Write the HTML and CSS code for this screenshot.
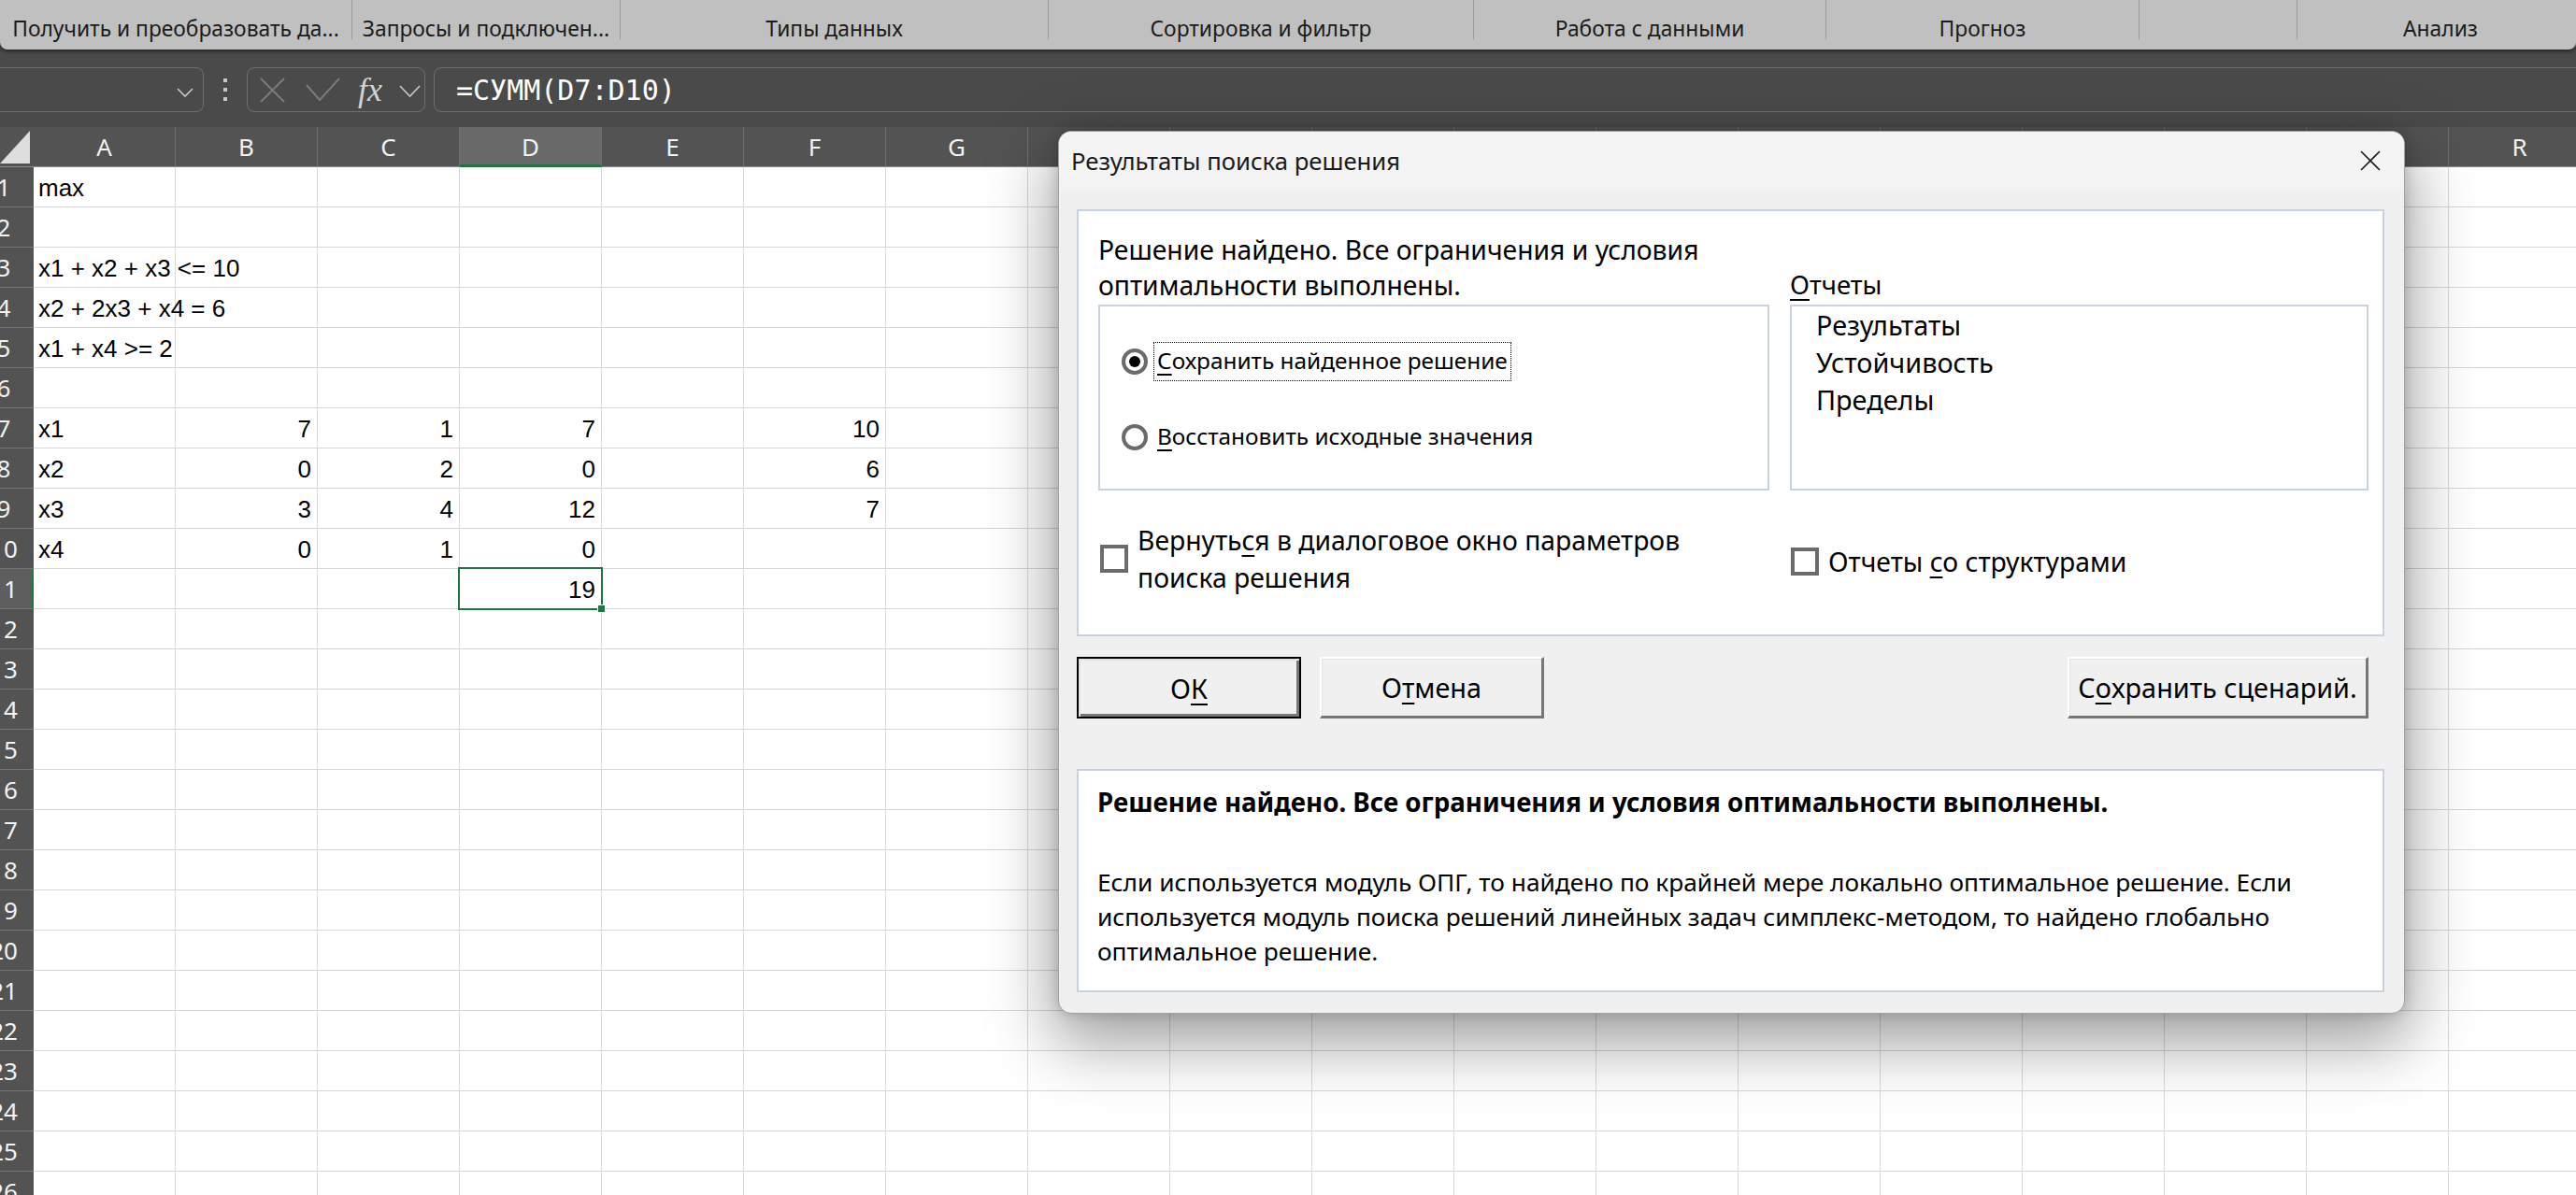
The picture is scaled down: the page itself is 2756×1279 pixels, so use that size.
FILE: index.html
```html
<!DOCTYPE html>
<html lang="ru">
<head>
<meta charset="utf-8">
<title>Результаты поиска решения</title>
<link rel="stylesheet" href="styles.css">
</head>
<body>
<div class="app">
  <header class="ribbon">
    <div class="grp g1"><span class="glabel">Получить и преобразовать да...</span></div>
    <div class="grp g2"><span class="glabel">Запросы и подключен...</span></div>
    <div class="grp g3"><span class="glabel">Типы данных</span></div>
    <div class="grp g4"><span class="glabel">Сортировка и фильтр</span></div>
    <div class="grp g5"><span class="glabel">Работа с данными</span></div>
    <div class="grp g6"><span class="glabel">Прогноз</span></div>
    <div class="grp g7"></div>
    <div class="grp g8"><span class="glabel">Анализ</span></div>
  </header>

  <div class="fbar">
    <div class="namebox">
      <svg class="chev" width="18" height="10" viewBox="0 0 18 10"><path d="M1 1 L9 9 L17 1" fill="none" stroke="#c8c8c8" stroke-width="1.6"/></svg>
    </div>
    <div class="dots">
      <svg width="6" height="24" viewBox="0 0 6 24"><rect x="1" y="0" width="4" height="4" fill="#c8c8c8"/><rect x="1" y="10" width="4" height="4" fill="#c8c8c8"/><rect x="1" y="20" width="4" height="4" fill="#c8c8c8"/></svg>
    </div>
    <div class="fbtns">
      <svg class="ico-x" width="27" height="27" viewBox="0 0 27 27"><path d="M1 1 L26 26 M26 1 L1 26" fill="none" stroke="#7b7b7b" stroke-width="2"/></svg>
      <svg class="ico-check" width="37" height="26" viewBox="0 0 37 26"><path d="M1 8 L15 24 L36 1" fill="none" stroke="#7b7b7b" stroke-width="2"/></svg>
      <span class="fx">fx</span>
      <svg class="chev2" width="23" height="14" viewBox="0 0 23 14"><path d="M1 1 L11.5 12 L22 1" fill="none" stroke="#c8c8c8" stroke-width="1.6"/></svg>
    </div>
    <div class="finput">=СУММ(D7:D10)</div>
  </div>

  <div class="sheet">
    <div class="colhead">
      <div class="corner"><svg width="36" height="43" viewBox="0 0 36 43"><polygon points="0,39 32,4 32,39" fill="#dedede"/></svg></div>
      <div class="ch">A</div><div class="ch">B</div><div class="ch">C</div><div class="ch sel">D</div><div class="ch">E</div><div class="ch">F</div><div class="ch">G</div><div class="ch"></div><div class="ch"></div><div class="ch"></div><div class="ch"></div><div class="ch"></div><div class="ch"></div><div class="ch"></div><div class="ch"></div><div class="ch"></div><div class="ch"></div><div class="ch">R</div>
    </div>
    <div class="sbody">
      <div class="rowheads">
        <div class="rh"><span>1</span></div><div class="rh"><span>2</span></div><div class="rh"><span>3</span></div><div class="rh"><span>4</span></div><div class="rh"><span>5</span></div><div class="rh"><span>6</span></div><div class="rh"><span>7</span></div><div class="rh"><span>8</span></div><div class="rh"><span>9</span></div><div class="rh"><span>10</span></div><div class="rh sel"><span>11</span></div><div class="rh"><span>12</span></div><div class="rh"><span>13</span></div><div class="rh"><span>14</span></div><div class="rh"><span>15</span></div><div class="rh"><span>16</span></div><div class="rh"><span>17</span></div><div class="rh"><span>18</span></div><div class="rh"><span>19</span></div><div class="rh"><span>20</span></div><div class="rh"><span>21</span></div><div class="rh"><span>22</span></div><div class="rh"><span>23</span></div><div class="rh"><span>24</span></div><div class="rh"><span>25</span></div><div class="rh"><span>26</span></div>
      </div>
      <div class="cells">
        <div class="row"><div class="cell">max</div></div>
        <div class="row"></div>
        <div class="row"><div class="cell">x1 + x2 + x3 &lt;= 10</div></div>
        <div class="row"><div class="cell">x2 + 2x3 + x4 = 6</div></div>
        <div class="row"><div class="cell">x1 + x4 &gt;= 2</div></div>
        <div class="row"></div>
        <div class="row"><div class="cell">x1</div><div class="cell num">7</div><div class="cell num">1</div><div class="cell num">7</div><div class="cell"></div><div class="cell num">10</div></div>
        <div class="row"><div class="cell">x2</div><div class="cell num">0</div><div class="cell num">2</div><div class="cell num">0</div><div class="cell"></div><div class="cell num">6</div></div>
        <div class="row"><div class="cell">x3</div><div class="cell num">3</div><div class="cell num">4</div><div class="cell num">12</div><div class="cell"></div><div class="cell num">7</div></div>
        <div class="row"><div class="cell">x4</div><div class="cell num">0</div><div class="cell num">1</div><div class="cell num">0</div></div>
        <div class="row"><div class="cell"></div><div class="cell"></div><div class="cell"></div><div class="cell num sel">19</div></div>
      </div>
    </div>
  </div>

  <div class="dialog">
    <div class="dtitle">
      <span>Результаты поиска решения</span>
      <svg class="close" width="22" height="22" viewBox="0 0 22 22"><path d="M1 1 L21 21 M21 1 L1 21" fill="none" stroke="#1a1a1a" stroke-width="1.6"/></svg>
    </div>
    <div class="dbody">
      <section class="panel1">
        <div class="msg">Решение найдено. Все ограничения и условия<br>оптимальности выполнены.</div>
        <div class="replabel"><u>О</u>тчеты</div>
        <div class="radiobox">
          <div class="ropt"><span class="radio on"></span><span class="rlabel focus"><u>С</u>охранить найденное решение</span></div>
          <div class="ropt"><span class="radio"></span><span class="rlabel"><u>В</u>осстановить исходные значения</span></div>
        </div>
        <div class="listbox">
          <div class="li">Результаты</div>
          <div class="li">Устойчивость</div>
          <div class="li">Пределы</div>
        </div>
        <div class="chk left"><span class="box"></span><span class="clabel">Вернуть<u>с</u>я в диалоговое окно параметров<br>поиска решения</span></div>
        <div class="chk right"><span class="box"></span><span class="clabel">Отчеты <u>с</u>о структурами</span></div>
      </section>

      <div class="btnrow">
        <button class="btn ok">О<u>К</u></button>
        <button class="btn cancel">О<u>т</u>мена</button>
        <button class="btn save">С<u>о</u>хранить сценарий.</button>
      </div>

      <section class="panel2">
        <div class="bold">Решение найдено. Все ограничения и условия оптимальности выполнены.</div>
        <div class="para">Если используется модуль ОПГ, то найдено по крайней мере локально оптимальное решение. Если<br>используется модуль поиска решений линейных задач симплекс-методом, то найдено глобально<br>оптимальное решение.</div>
      </section>
    </div>
  </div>
</div>
</body>
</html>
```
FILE: styles.css
```css
* { box-sizing: border-box; }
html, body { margin: 0; padding: 0; }
body {
  width: 2756px;
  height: 1279px;
  overflow: hidden;
  background: #4a4a4a;
  font-family: "Noto Sans", "Open Sans", sans-serif;
}
.app { position: relative; width: 2756px; height: 1279px; overflow: hidden; }

/* Ribbon */
.ribbon {
  position: relative;
  z-index: 2;
  display: flex;
  height: 53px;
  background: #c0c0c0;
  border-radius: 0 0 8px 8px;
  box-shadow: 0 2px 4px rgba(0, 0, 0, 0.55);
}
.grp {
  flex: none;
  height: 42px;
  display: flex;
  align-items: flex-end;
  justify-content: center;
  border-right: 1px solid #9c9c9c;
}
.glabel { font-size: 22.8px; line-height: 26px; color: #1b1b1b; white-space: nowrap; margin-bottom: -2px; }
.g1 { width: 377px; }
.g2 { width: 287px; }
.g3 { width: 458px; }
.g4 { width: 455px; }
.g5 { width: 377px; }
.g6 { width: 335px; }
.g7 { width: 169px; }
.g8 { width: 306px; border-right: none; }

/* Formula bar */
.fbar { height: 83px; display: flex; align-items: flex-start; padding-top: 19px; }
.namebox {
  flex: none;
  width: 230px;
  height: 48px;
  margin-left: -12px;
  border: 1px solid #6f6f6f;
  border-radius: 8px;
  display: flex;
  align-items: center;
  justify-content: flex-end;
  padding-right: 10px;
  padding-top: 5px;
}
.dots { flex: none; width: 46px; height: 48px; display: flex; align-items: center; justify-content: center; }
.fbtns {
  flex: none;
  width: 191px;
  height: 48px;
  border: 1px solid #6f6f6f;
  border-radius: 8px;
  display: flex;
  align-items: center;
  padding-left: 13px;
}
.ico-x { flex: none; margin-right: 22px; }
.ico-check { flex: none; margin-right: 19px; }
.fx {
  flex: none;
  width: 33px;
  margin-right: 11px;
  font-family: "Liberation Serif", serif;
  font-style: italic;
  font-size: 36px;
  line-height: 1;
  color: #d2d2d2;
}
.chev2 { flex: none; margin-top: 4px; }
.finput {
  flex: 1;
  height: 48px;
  margin-left: 9px;
  margin-right: -20px;
  border: 1px solid #6f6f6f;
  border-radius: 8px;
  display: flex;
  align-items: center;
  padding-left: 23px;
  font-family: "DejaVu Sans Mono", "Liberation Mono", monospace;
  font-size: 30px;
  color: #ffffff;
}

/* Sheet */
.sheet { background: #ffffff; height: 1143px; }
.colhead { display: flex; height: 43px; background: #535353; }
.corner { flex: none; width: 36px; height: 43px; border-bottom: 1px solid #8c8c8c; }
.corner svg { display: block; }
.ch {
  flex: none;
  width: 152px;
  height: 43px;
  border-right: 1px solid #6e6e6e;
  border-bottom: 1px solid #8c8c8c;
  display: flex;
  align-items: center;
  justify-content: center;
  color: #f2f2f2;
  font-size: 26px;
}
.ch.sel { background: #696969; border-bottom: 3px solid #217346; padding-top: 2px; }
.sbody { display: flex; }
.rowheads { flex: none; width: 36px; background: #535353; }
.rh {
  height: 43px;
  border-bottom: 1px solid #767676;
  overflow: hidden;
  display: flex;
  align-items: center;
  color: #f2f2f2;
  font-size: 26px;
}
.rh span { flex: none; width: 62px; margin-left: -27px; text-align: center; }
.rh.sel { background: #5e5e5e; border-right: 2px solid #217346; }
.cells {
  flex: 1;
  height: 1100px;
  background-image:
    linear-gradient(to left, #dadada 1px, transparent 1px),
    linear-gradient(to top, #d6d6d6 1px, transparent 1px);
  background-size: 152px 43px;
}
.row { display: flex; height: 43px; }
.cell {
  flex: none;
  width: 152px;
  height: 43px;
  display: flex;
  align-items: flex-end;
  padding: 0 5px 6px 5px;
  font-family: "Liberation Sans", Arial, sans-serif;
  font-size: 26px;
  line-height: 30px;
  white-space: nowrap;
  color: #000;
}
.cell.num { justify-content: flex-end; padding-right: 7px; }
.cell.sel { position: relative; }
.cell.sel::before {
  content: "";
  position: absolute;
  left: -2px;
  top: -2px;
  right: -1px;
  bottom: -1px;
  border: 2px solid #217346;
}
.cell.sel::after {
  content: "";
  position: absolute;
  right: -4px;
  bottom: -4px;
  width: 7px;
  height: 7px;
  background: #217346;
  border: 1px solid #ffffff;
}

/* Dialog */
.dialog {
  position: absolute;
  left: 1132px;
  top: 140px;
  width: 1441px;
  height: 945px;
  background: #f0f0f0;
  border: 1px solid #a2a2a2;
  border-radius: 14px;
  box-shadow: 0 26px 70px 6px rgba(0, 0, 0, 0.38), 0 0 14px rgba(0, 0, 0, 0.18);
  overflow: hidden;
  display: flex;
  flex-direction: column;
  color: #000;
  font-family: "Noto Sans", "Open Sans", sans-serif;
  font-size: 28px;
}
.dtitle {
  flex: none;
  height: 62px;
  background: #f3f3f3;
  display: flex;
  align-items: center;
  justify-content: space-between;
  padding: 0 25px 0 13px;
  font-size: 25.7px;
  color: #1a1a1a;
}
.dbody { flex: 1; display: flex; flex-direction: column; padding: 21px 21px 0 19px; }
u { text-decoration-thickness: 2px; text-underline-offset: 5px; }

.panel1 {
  flex: none;
  height: 457px;
  background: #ffffff;
  border: 2px solid #c8d2dd;
  padding: 22px 15px 0 21px;
  display: grid;
  grid-template-columns: 718px 619px;
  grid-template-rows: 76px 199px auto;
  align-content: start;
  column-gap: 22px;
  row-gap: 2px;
}
.msg { font-size: 28.3px; line-height: 38px; white-space: nowrap; }
.replabel { align-self: end; font-size: 27.5px; line-height: 38px; }
.radiobox {
  border: 2px solid #c8d2dd;
  padding: 38px 0 0 23px;
  display: flex;
  flex-direction: column;
  gap: 39px;
}
.ropt { display: flex; align-items: center; height: 42px; gap: 6px; }
.radio {
  flex: none;
  width: 28px;
  height: 28px;
  border-radius: 50%;
  border: 4px solid #6b6b6b;
  background: #ffffff;
  display: flex;
  align-items: center;
  justify-content: center;
}
.radio.on::after { content: ""; width: 12px; height: 12px; border-radius: 50%; background: #000; }
.rlabel { height: 42px; line-height: 40px; padding: 0 4px; white-space: nowrap; font-size: 24.4px; }
.rlabel.focus { outline: 1px dotted #000; outline-offset: -1px; }
.listbox { border: 2px solid #c8d2dd; padding-left: 26px; }
.li { font-size: 28.8px; line-height: 40px; }
.chk { margin-top: 31px; display: flex; align-items: center; gap: 10px; align-self: start; }
.chk.left { margin-left: 2px; }
.chk.right { margin-left: 1px; padding-top: 6px; height: 80px; }
.box { flex: none; width: 30px; height: 30px; border: 4px solid #6b6b6b; background: #fff; }
.clabel { font-size: 28.3px; line-height: 40px; white-space: nowrap; }

.btnrow { flex: none; display: flex; margin-top: 22px; height: 66px; }
.btn {
  flex: none;
  height: 66px;
  background: #f0f0f0;
  border-style: solid;
  border-width: 2px 3px 3px 2px;
  border-color: #ffffff #777777 #777777 #ffffff;
  box-shadow: inset 1px 1px 0 #e3e3e3;
  font-family: inherit;
  font-size: 28.8px;
  color: #000;
  padding: 0;
  display: flex;
  align-items: center;
  justify-content: center;
}
.btn.ok {
  width: 240px;
  border: 2px solid #000;
  box-shadow: inset 2px 2px 0 #e3e3e3, inset -3px -3px 0 #777777;
}
.btn.cancel { width: 240px; margin-left: 20px; }
.btn.save { width: 322px; margin-left: auto; margin-right: 17px; }

.panel2 {
  flex: none;
  margin-top: 54px;
  height: 239px;
  background: #ffffff;
  border: 2px solid #c8d2dd;
  padding: 15px 20px 0 20px;
}
.bold { font-size: 27.7px; font-weight: 700; line-height: 37px; white-space: nowrap; }
.para { font-size: 26.3px; margin-top: 49px; line-height: 37px; white-space: nowrap; }
```
